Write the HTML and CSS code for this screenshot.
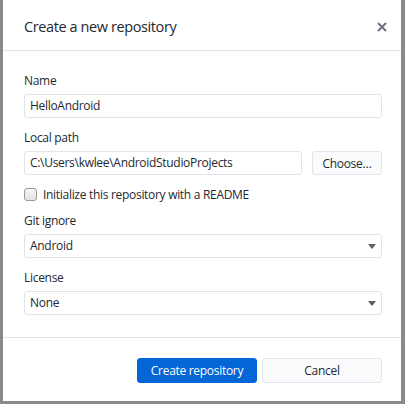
FILE: index.html
```html
<!DOCTYPE html>
<html>
<head>
<meta charset="utf-8">
<link rel="stylesheet" href="styles.css">
</head>
<body>
<div class="dialog">
  <div class="header">
    <h1 class="title">Create a new repository</h1>
    <button class="close" aria-label="Close">
      <svg width="10" height="10" viewBox="0 0 10 10"><path d="M1 1L9 9M9 1L1 9" stroke="#6a737d" stroke-width="2" fill="none"/></svg>
    </button>
  </div>
  <div class="body">
    <div class="group">
      <div class="label">Name</div>
      <div class="input">HelloAndroid</div>
    </div>
    <div class="group">
      <div class="label">Local path</div>
      <div class="row">
        <div class="input grow">C:\Users\kwlee\AndroidStudioProjects</div>
        <div class="btn choose">Choose…</div>
      </div>
    </div>
    <div class="check-row">
      <span class="checkbox"></span>
      <span class="check-text">Initialize this repository with a README</span>
    </div>
    <div class="group">
      <div class="label">Git ignore</div>
      <div class="input select">Android<span class="arrow"></span></div>
    </div>
    <div class="group">
      <div class="label">License</div>
      <div class="input select">None<span class="arrow"></span></div>
    </div>
  </div>
  <div class="footer">
    <div class="btn primary">Create repository</div>
    <div class="btn cancel">Cancel</div>
  </div>
</div>
</body>
</html>
```
FILE: styles.css
```css
html, body {
  margin: 0;
  padding: 0;
}
body {
  background: #8a8a8a;
  width: 405px;
  height: 404px;
  overflow: hidden;
  font-family: "Open Sans", "Noto Sans", sans-serif;
  font-size: 12px;
  letter-spacing: -0.3px;
  color: #24292e;
}
.dialog {
  margin-left: 3px;
  width: 398px;
  height: 401px;
  background: #fff;
  display: flex;
  flex-direction: column;
}
.header {
  height: 51px;
  border-bottom: 1px solid #e1e4e8;
  box-sizing: border-box;
  display: flex;
  align-items: center;
  padding: 0 14px 0 21px;
}
.title {
  margin: 0;
  flex: 1;
  font-size: 14.5px;
  letter-spacing: -0.4px;
  font-weight: 400;
  color: #24292e;
  padding-top: 2px;
}
.close {
  border: 0;
  background: none;
  padding: 0;
  width: 10px;
  height: 10px;
  display: flex;
  margin-top: 3px;
}
.body {
  padding: 22px 19px 22px 21px;
  border-bottom: 1px solid #e1e4e8;
}
.group + .group {
  margin-top: 12px;
}
.label {
  line-height: 16px;
  margin-bottom: 5px;
}
.input {
  height: 24px;
  box-sizing: border-box;
  border: 1px solid #e1e4e8;
  border-radius: 3px;
  padding: 0 5px;
  line-height: 22px;
  display: flex;
  align-items: center;
}
.row {
  display: flex;
  gap: 10px;
}
.grow {
  flex: 1;
}
.btn {
  height: 24px;
  box-sizing: border-box;
  border: 1px solid #e1e4e8;
  border-radius: 3px;
  background: #fafbfc;
  display: flex;
  align-items: center;
  justify-content: center;
}
.choose {
  width: 70px;
}
.check-row {
  display: flex;
  align-items: center;
  height: 16px;
  margin: 11px 0 11px;
}
.checkbox {
  width: 11px;
  height: 11px;
  border: 1px solid #9a9a9a;
  border-radius: 3px;
  background: linear-gradient(#f6f6f6, #e2e2e2);
  margin-right: 6px;
}
.select {
  justify-content: space-between;
}
.arrow {
  width: 0;
  height: 0;
  border-left: 4px solid transparent;
  border-right: 4px solid transparent;
  border-top: 5px solid #586069;
}
.footer {
  flex: 1;
  display: flex;
  justify-content: flex-end;
  align-items: flex-start;
  gap: 5px;
  padding: 20px 19px 0 0;
}
.footer .btn {
  width: 120px;
  height: 25px;
}
.primary {
  background: #0366d6;
  border-color: #0366d6;
  color: #fff;
}
.cancel {
  background: #fafbfc;
}
```
